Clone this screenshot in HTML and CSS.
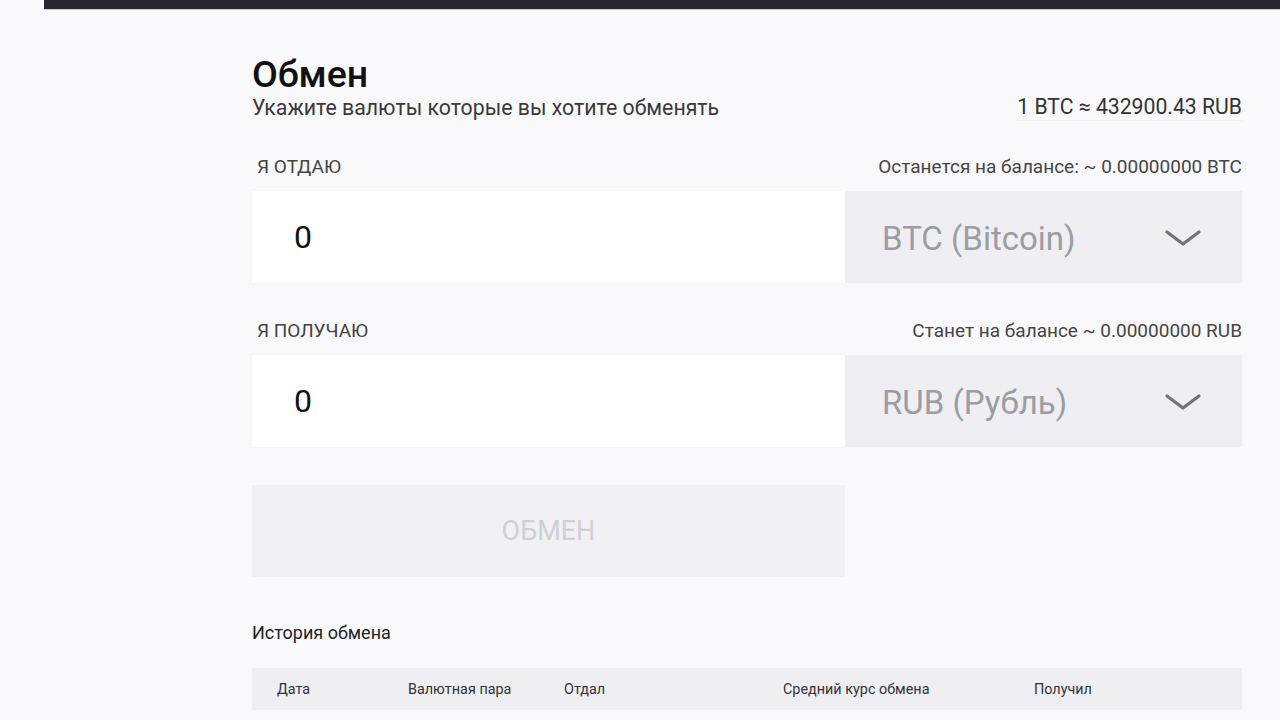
FILE: index.html
```html
<!DOCTYPE html>
<html lang="ru">
<head>
<meta charset="utf-8">
<title>Обмен</title>
<link rel="stylesheet" href="styles.css">
</head>
<body>
<div class="topbar"></div>
<main class="main">
  <div class="head">
    <div class="head-left">
      <h1 class="title">Обмен</h1>
      <p class="subtitle">Укажите валюты которые вы хотите обменять</p>
    </div>
    <div class="rate">1 BTC ≈ 432900.43 RUB</div>
  </div>

  <div class="field-head">
    <span class="label">Я ОТДАЮ</span>
    <span class="balance">Останется на балансе: ~ 0.00000000 BTC</span>
  </div>
  <div class="field">
    <div class="amount">0</div>
    <div class="select">
      <span class="select-text">BTC (Bitcoin)</span>
      <svg class="chev" width="38" height="20" viewBox="0 0 38 20"><path d="M3 4 L19 16 L35 4" fill="none" stroke="#727272" stroke-width="3.2" stroke-linecap="round" stroke-linejoin="round"/></svg>
    </div>
  </div>

  <div class="field-head">
    <span class="label">Я ПОЛУЧАЮ</span>
    <span class="balance">Станет на балансе ~ 0.00000000 RUB</span>
  </div>
  <div class="field">
    <div class="amount">0</div>
    <div class="select">
      <span class="select-text">RUB (Рубль)</span>
      <svg class="chev" width="38" height="20" viewBox="0 0 38 20"><path d="M3 4 L19 16 L35 4" fill="none" stroke="#727272" stroke-width="3.2" stroke-linecap="round" stroke-linejoin="round"/></svg>
    </div>
  </div>

  <button class="btn" type="button">ОБМЕН</button>

  <h2 class="history-title">История обмена</h2>
  <div class="table-head">
    <span>Дата</span>
    <span>Валютная пара</span>
    <span>Отдал</span>
    <span>Средний курс обмена</span>
    <span>Получил</span>
  </div>
</main>
</body>
</html>
```

FILE: styles.css
```css
html, body {
  margin: 0;
  padding: 0;
  background: #f9f9fb;
  font-family: Roboto, "Noto Sans", "Liberation Sans", sans-serif;
  color: #1a1a1a;
  overflow: hidden;
}

.topbar {
  margin-left: 44px;
  height: 9px;
  background: #28262f;
  border-bottom: 1px solid #c9c9cf;
}

.main {
  width: 990px;
  margin-left: 252px;
  padding-top: 44px;
}

.head {
  display: flex;
  justify-content: space-between;
  align-items: flex-end;
}

.title {
  margin: 0;
  font-size: 37.5px;
  font-weight: 500;
  line-height: 40px;
  color: #111;
}

.subtitle {
  margin: 0;
  font-size: 21.3px;
  line-height: 28px;
  color: #3a3a3a;
}

.rate {
  font-size: 21.2px;
  line-height: 26px;
  color: #333;
  border-bottom: 1px dotted #e6e6ea;
  margin-bottom: 1px;
}

.field-head {
  display: flex;
  justify-content: space-between;
  align-items: center;
  margin-top: 30px;
  height: 28px;
  padding-left: 5px;
}

.field + .field-head {
  margin-top: 33px;
}

.label {
  font-size: 19px;
  color: #444;
}

.balance {
  font-size: 19px;
  color: #444;
}

.field {
  display: flex;
  height: 92px;
  margin-top: 11px;
}

.amount {
  width: 593px;
  background: #ffffff;
  box-shadow: 0 0 2px rgba(0,0,0,0.04);
  display: flex;
  align-items: center;
  padding-left: 42px;
  box-sizing: border-box;
  font-size: 32px;
  color: #111;
}

.select {
  flex: 1;
  background: #efeff3;
  display: flex;
  align-items: center;
  justify-content: space-between;
  padding: 2px 40px 0 37px;
  box-sizing: border-box;
}

.select-text {
  font-size: 33px;
  color: #9c9ca2;
}

.chev {
  display: block;
}

.btn {
  display: flex;
  align-items: center;
  justify-content: center;
  width: 593px;
  height: 92px;
  margin-top: 38px;
  border: none;
  background: #f1f1f4;
  font-family: inherit;
  font-size: 27px;
  color: #cfcfd4;
  padding: 0;
}

.history-title {
  margin: 44px 0 0;
  font-size: 18px;
  font-weight: 400;
  line-height: 24px;
  color: #222;
}

.table-head {
  display: grid;
  grid-template-columns: 131px 156px 219px 251px 1fr;
  align-items: center;
  height: 42px;
  margin-top: 23px;
  padding-left: 25px;
  background: #efeff3;
  font-size: 14.4px;
  color: #333;
}
```
